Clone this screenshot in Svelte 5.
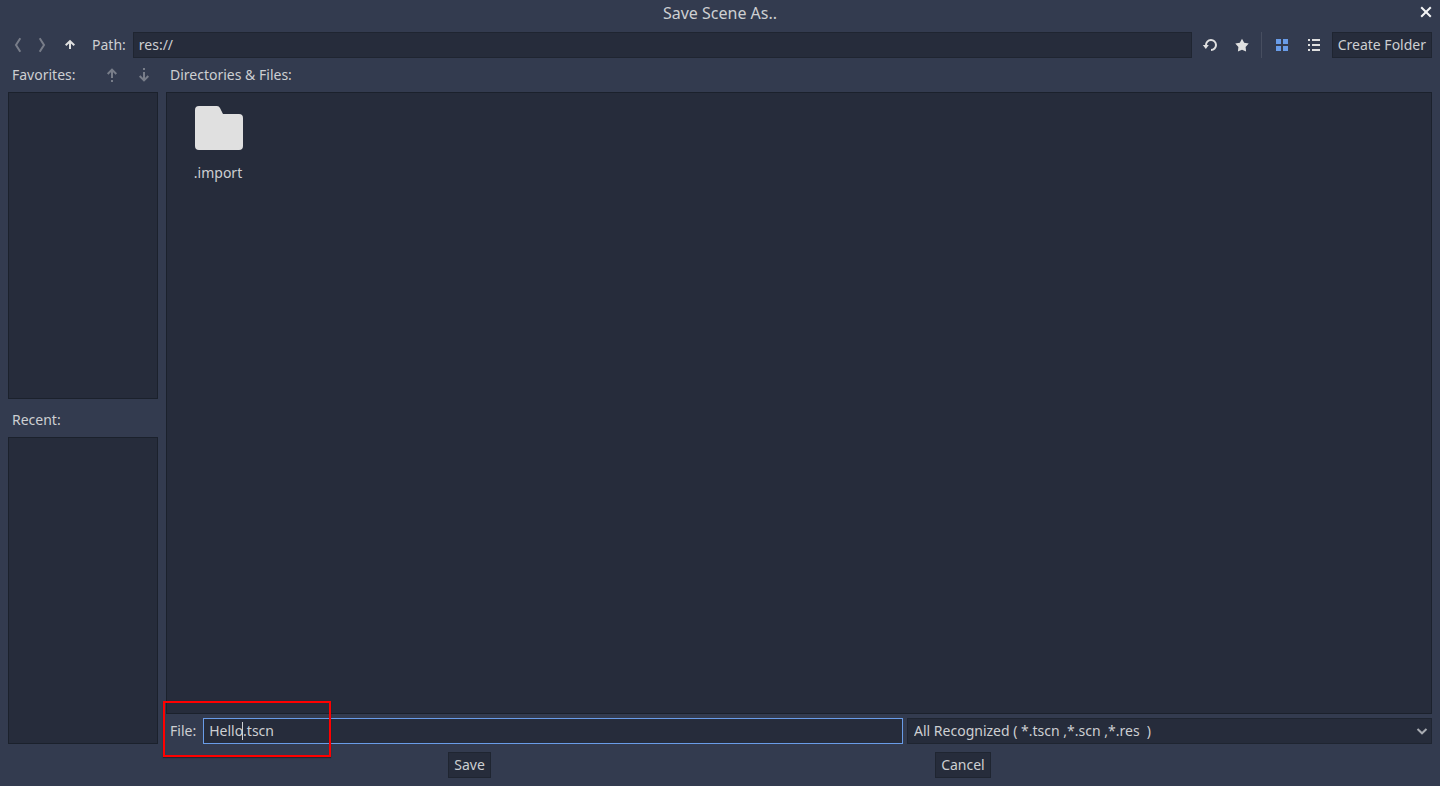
<script>
  let path = $state('res://');
  let fileName = $state('Hello.tscn');
  const filters = ['All Recognized ( *.tscn ,*.scn ,*.res\u00a0 )'];
</script>

<div class="dialog">
  <header>
    <h1>Save Scene As..</h1>
    <button class="icon close" aria-label="Close">
      <svg width="16" height="16" viewBox="0 0 16 16"><path d="M3.2 3.2l9.6 9.6M12.8 3.2l-9.6 9.6" fill="none" stroke="#fff" stroke-opacity=".95" stroke-width="2" /></svg>
    </button>
  </header>

  <div class="toolbar">
    <button class="icon narrow dim" aria-label="Back">
      <svg width="16" height="16" viewBox="0 0 16 16"><path d="M10.3 1.3L6 8l4.3 6.7" class="line" /></svg>
    </button>
    <button class="icon narrow dim" aria-label="Forward">
      <svg width="16" height="16" viewBox="0 0 16 16"><path d="M5.7 1.3L10 8l-4.3 6.7" class="line" /></svg>
    </button>
    <button class="icon" aria-label="Parent folder">
      <svg width="16" height="16" viewBox="0 0 16 16"><path d="M3.7 8.2L8 4.2l4.3 4M8 5v7" class="line" /></svg>
    </button>
    <label for="path">Path:</label>
    <input id="path" class="field grow" type="text" spellcheck="false" bind:value={path} />
    <button class="icon" aria-label="Refresh">
      <svg width="16" height="16" viewBox="0 0 16 16"><path d="M4 8.2A5 5 0 1 1 9 13" class="line" /><path d="M.8 8h6L3.8 12z" fill="#e0e0e0" /></svg>
    </button>
    <button class="icon" aria-label="Toggle favorite">
      <svg width="16" height="16" viewBox="0 0 16 16"><path d="M8 1.7l2.2 4 4.5.9-3.1 3.4.5 4.6L8 12.7l-4.1 1.9.5-4.6-3.1-3.4 4.5-.9z" fill="#e0e0e0" /></svg>
    </button>
    <span class="separator"></span>
    <button class="icon" aria-label="View as thumbnails">
      <svg width="16" height="16" viewBox="0 0 16 16"><path d="M2 2h5v5H2zM9 2h5v5H9zM2 9h5v5H2zM9 9h5v5H9z" fill="#699ce8" /></svg>
    </button>
    <button class="icon" aria-label="View as list">
      <svg width="16" height="16" viewBox="0 0 16 16"><path d="M2 2h2v2H2zM6 2h8v2H6zM2 7h2v2H2zM6 7h8v2H6zM2 12h2v2H2zM6 12h8v2H6z" fill="#e0e0e0" /></svg>
    </button>
    <button class="push">Create Folder</button>
  </div>

  <main>
    <aside>
      <div class="heading">
        <h2 class="grow">Favorites:</h2>
        <button class="icon dim" aria-label="Move favorite up">
          <svg width="16" height="16" viewBox="0 0 16 16"><path d="M3.7 7L8 2.6 12.3 7M8 3v8M8 13v2" class="line" /></svg>
        </button>
        <button class="icon dim" aria-label="Move favorite down">
          <svg width="16" height="16" viewBox="0 0 16 16"><path d="M3.7 9L8 13.4 12.3 9M8 5v8M8 1v2" class="line" /></svg>
        </button>
      </div>
      <div class="list"></div>
      <div class="heading recent"><h2>Recent:</h2></div>
      <div class="list"></div>
    </aside>

    <section>
      <div class="heading"><h2>Directories &amp; Files:</h2></div>
      <div class="list files">
        <button class="folder">
          <svg width="48" height="44" viewBox="0 0 48 44"><path d="M4 0h18q2 0 3 2l3 6h16a4 4 0 0 1 4 4v28a4 4 0 0 1-4 4H4a4 4 0 0 1-4-4V4a4 4 0 0 1 4-4z" fill="#e0e0e0" /></svg>
          <span>.import</span>
        </button>
      </div>
      <div class="filerow">
        <label for="file">File:</label>
        <div class="inputs">
          <div class="editing">
            <input id="file" class="field active" type="text" spellcheck="false" bind:value={fileName} />
            <span class="caret"></span>
          </div>
          <div class="filter">
            <select class="field" aria-label="File type">
              {#each filters as filter}<option>{filter}</option>{/each}
            </select>
            <svg width="16" height="16" viewBox="0 0 16 16"><path d="M3.5 6L8 10.3 12.5 6" fill="none" stroke="#a8abb1" stroke-width="2" /></svg>
          </div>
        </div>
        <span class="highlight"></span>
      </div>
    </section>
  </main>

  <footer>
    <button class="push">Save</button>
    <button class="push">Cancel</button>
  </footer>
</div>

<style>
  :global(body) {
    margin: 0;
    background: #333b4f;
  }
  .dialog {
    box-sizing: border-box;
    display: flex;
    flex-direction: column;
    min-height: 100vh;
    padding: 0 8px 8px;
    background: #333b4f;
    color: #cdcfd2;
    font: 14px/20px "Noto Sans", "Open Sans", sans-serif;
  }
  button, input, select {
    box-sizing: border-box;
    margin: 0;
    font: inherit;
    color: inherit;
    border-radius: 0;
    outline: none;
  }
  svg { display: block; flex: none; }
  .line { fill: none; stroke: #e0e0e0; stroke-width: 2; }
  .grow { flex: 1; min-width: 0; }
  header {
    display: grid;
    grid-template-columns: 16px 1fr 16px;
    align-items: center;
    height: 26px;
    margin-bottom: 6px;
  }
  h1 {
    grid-column: 2;
    margin: 0;
    font-size: 16px;
    line-height: 26px;
    font-weight: 400;
    text-align: center;
  }
  h2 {
    margin: 0;
    padding: 0 4px;
    font-size: 14px;
    font-weight: 400;
  }
  label { padding: 0 3px 0 4px; white-space: nowrap; }
  .toolbar, .heading {
    display: flex;
    align-items: center;
    gap: 4px;
    height: 26px;
  }
  .toolbar { margin-bottom: 4px; }
  .icon {
    display: flex;
    flex: none;
    align-items: center;
    justify-content: center;
    width: 28px;
    height: 26px;
    padding: 0;
    border: 0;
    background: none;
  }
  .narrow { width: 20px; }
  .close {
    align-self: start;
    justify-self: end;
    width: 16px;
    height: 24px;
    margin-right: -2px;
  }
  .dim svg { opacity: .4; }
  .separator {
    width: 4px;
    height: 26px;
    box-sizing: border-box;
    border-left: 1px solid #474e60;
    margin-left: 1px;
    margin-right: -1px;
  }
  .field, .push, .list {
    background: #262c3b;
    border: 1px solid #1f2531;
  }
  .field {
    height: 26px;
    padding: 0 5px 2px;
  }
  .active { border-color: #699ce8; }
  .push {
    flex: none;
    height: 26px;
    padding: 0 5px;
    line-height: 24px;
  }
  main {
    display: flex;
    flex: 1;
    gap: 8px;
  }
  aside, section {
    display: flex;
    flex-direction: column;
    gap: 4px;
  }
  aside { width: 150px; flex: none; }
  section { flex: 1; min-width: 0; }
  .recent { margin-top: 4px; }
  .list {
    flex: 1 1 0;
    border-color: #1b212c;
  }
  .files { padding: 13px 20px; }
  .folder {
    display: flex;
    flex-direction: column;
    align-items: center;
    gap: 13px;
    width: 64px;
    padding: 0;
    border: 0;
    background: none;
  }
  .folder span { margin-right: 2px; }
  .filerow {
    position: relative;
    display: flex;
    align-items: center;
    gap: 4px;
  }
  .inputs {
    display: grid;
    flex: 1;
    grid-template-columns: 4fr 3fr;
    gap: 4px;
  }
  .editing, .filter { position: relative; display: flex; }
  .editing input, .filter select { width: 100%; }
  .filter select {
    appearance: none;
    padding: 0 24px 0 6px;
  }
  .filter svg {
    position: absolute;
    right: 2px;
    top: 5px;
    pointer-events: none;
  }
  .caret {
    position: absolute;
    left: 39px;
    top: 4px;
    width: 1px;
    height: 18px;
    background: #cdcfd2;
  }
  .highlight {
    position: absolute;
    left: -3px;
    top: -17px;
    box-sizing: border-box;
    width: 168px;
    height: 56px;
    border: 2px solid #f00;
    box-shadow: 0 1px 1px rgba(0, 0, 0, .35);
    pointer-events: none;
  }
  footer {
    display: flex;
    justify-content: space-evenly;
    gap: 4px;
    margin-top: 8px;
    padding-right: 1px;
  }
</style>
